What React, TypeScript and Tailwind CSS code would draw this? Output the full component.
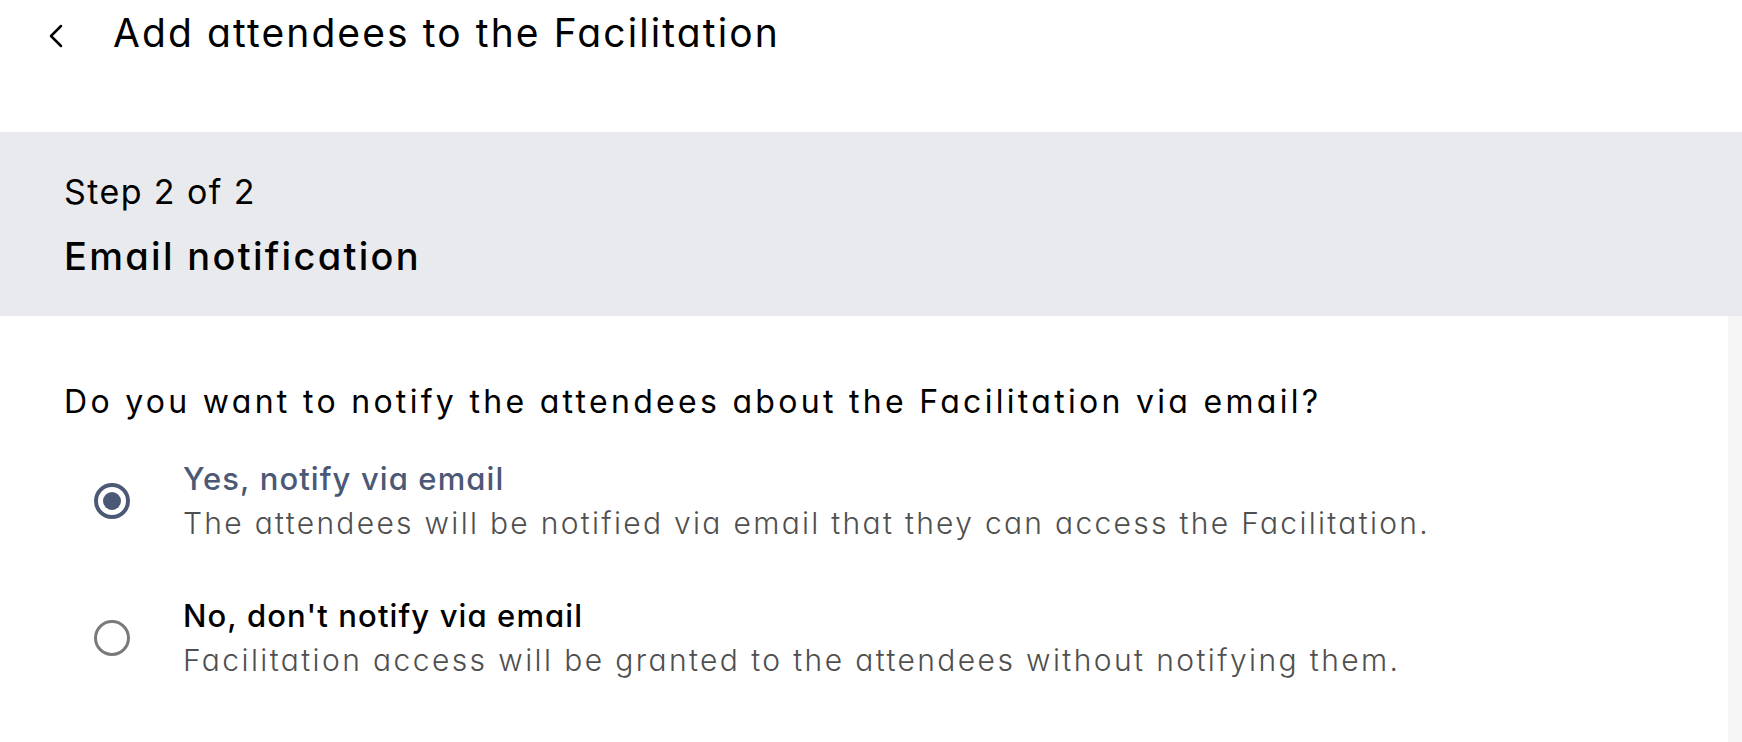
import { useState } from 'react';

type Choice = 'yes' | 'no';

const options: { id: Choice; label: string; hint: string; hintTracking: string }[] = [
  {
    id: 'yes',
    label: 'Yes, notify via email',
    hint: 'The attendees will be notified via email that they can access the Facilitation.',
    hintTracking: 'tracking-[2.3px]',
  },
  {
    id: 'no',
    label: "No, don't notify via email",
    hint: 'Facilitation access will be granted to the attendees without notifying them.',
    hintTracking: 'tracking-[2.4px]',
  },
];

function Radio({ checked }: { checked: boolean }) {
  return (
    <span
      className={`flex items-center justify-center w-[36px] h-[36px] rounded-full shrink-0 ${
        checked ? 'border-[4px] border-[#4b5876]' : 'border-[3.5px] border-[#7a7a7a]'
      }`}
    >
      {checked && <span className="w-[18px] h-[18px] rounded-full bg-[#4b5876]" />}
    </span>
  );
}

export default function App() {
  const [choice, setChoice] = useState<Choice>('yes');

  return (
    <div className="h-[742px] flex flex-col bg-white overflow-hidden font-['Inter','Noto_Sans',sans-serif] [font-feature-settings:'cv11']">
      {/* Page header */}
      <header className="h-[132px] shrink-0">
        <div className="flex items-start pt-[13px]">
          <button className="ml-[46px] mt-[10px] w-[20px] h-[26px] flex items-center justify-center text-black">
            <svg width="18" height="26" viewBox="0 0 18 26" fill="none">
              <polyline points="14,3 4,13 14,23" stroke="currentColor" strokeWidth="2.5" strokeLinecap="round" strokeLinejoin="round" />
            </svg>
          </button>
          <h1 className="ml-[47px] text-[39px] leading-none tracking-[2.1px] text-black font-normal">
            Add attendees to the Facilitation
          </h1>
        </div>
      </header>

      {/* Step band */}
      <section className="h-[184px] shrink-0 bg-[#e9eaed] pl-[64px] pt-[43px]">
        <p className="text-[34px] leading-none tracking-[1.4px] text-black">Step 2 of 2</p>
        <h2 className="mt-[28px] text-[38px] leading-none tracking-[2.3px] font-medium text-black">
          Email notification
        </h2>
      </section>

      {/* Body */}
      <div className="flex-1 flex">
        <main className="flex-1 pl-[64px] pt-[70px]">
          <p className="text-[32px] leading-none tracking-[3.3px] text-black">
            Do you want to notify the attendees about the Facilitation via email?
          </p>
          <div className="mt-[45px] flex flex-col gap-[62px]">
            {options.map((o) => {
              const checked = choice === o.id;
              return (
                <label
                  key={o.id}
                  onClick={() => setChoice(o.id)}
                  className="flex items-center cursor-pointer pl-[30px]"
                >
                  <Radio checked={checked} />
                  <span className="ml-[53px] flex flex-col">
                    <span
                      className={`text-[31px] leading-none tracking-[1.1px] font-medium ${
                        checked ? 'text-[#4b5876]' : 'text-black'
                      }`}
                    >
                      {o.label}
                    </span>
                    <span className={`mt-[14px] text-[30px] leading-none font-light text-[#4f4f4f] ${o.hintTracking}`}>
                      {o.hint}
                    </span>
                  </span>
                </label>
              );
            })}
          </div>
        </main>
        <aside className="w-[14px] shrink-0 bg-[#f5f5f5]" />
      </div>
    </div>
  );
}
